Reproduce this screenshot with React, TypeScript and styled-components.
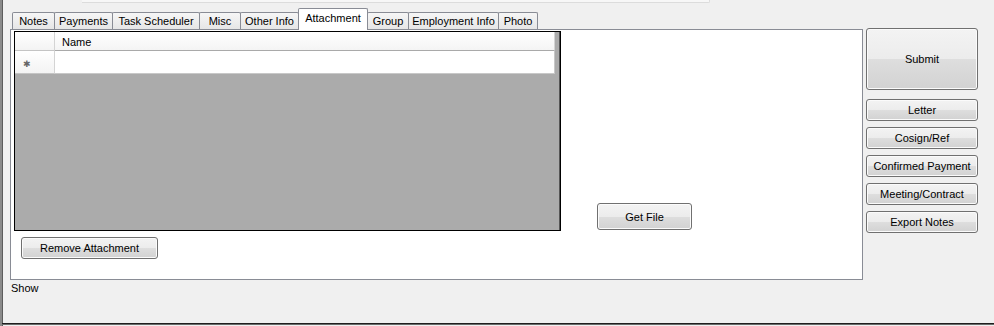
import React from "react";
import styled, { createGlobalStyle, css } from "styled-components";

const Global = createGlobalStyle`
  html, body { margin: 0; padding: 0; background: #f0f0f0; }
  body { font-family: "Liberation Sans", Arial, sans-serif; font-size: 11px; color: #000; }
  * { box-sizing: border-box; }
`;

const Window = styled.div`
  width: 994px;
  height: 326px;
  background: #f0f0f0;
  border-left: 2px solid #8a8a8a;
  box-shadow: inset 1px 0 0 #5c5c5c;
  display: flex;
  flex-direction: column;
  overflow: hidden;
`;

const TopField = styled.div`
  margin-left: 80px;
  width: 628px;
  height: 3px;
  background: #f7f7f7;
  border-bottom: 1px solid #dcdcdc;
  border-right: 1px solid #dcdcdc;
  border-bottom-right-radius: 2px;
  flex: none;
`;

const Main = styled.div`
  display: flex;
  margin-top: 5px;
  flex: none;
`;

const LeftCol = styled.div`
  margin-left: 8px;
  width: 853px;
  display: flex;
  flex-direction: column;
`;

const TabStrip = styled.div`
  height: 21px;
  display: flex;
  align-items: flex-end;
  padding-left: 2px;
`;

const Tab = styled.div<{ $w: number; $active?: boolean }>`
  width: ${(p) => p.$w + 1}px;
  margin-right: -1px;
  height: 17px;
  border: 1px solid #898c95;
  border-bottom: none;
  border-radius: 2px 2px 0 0;
  background: linear-gradient(#f6f6f6, #e6e6e6);
  display: flex;
  align-items: center;
  justify-content: center;
  white-space: nowrap;
  position: relative;
  ${(p) =>
    p.$active &&
    css`
      height: 22px;
      margin-bottom: -1px;
      background: #fff;
      z-index: 2;
      padding-bottom: 4px;
    `}
`;

const Panel = styled.div`
  height: 251px;
  border: 1px solid #898c95;
  background: #fff;
  padding: 1px 0 0 3px;
  display: flex;
  position: relative;
  z-index: 1;
`;

const LeftArea = styled.div`
  width: 547px;
  display: flex;
  flex-direction: column;
`;

const Grid = styled.div`
  width: 547px;
  height: 200px;
  border: 1px solid #000;
  background: #ababab;
  box-shadow: inset -1px 0 0 #555;
  display: flex;
  flex-direction: column;
`;

const GridRow = styled.div<{ $h: number }>`
  display: flex;
  width: 540px;
  height: ${(p) => p.$h}px;
  background: #fff;
`;

const RowHeaderCell = styled.div`
  width: 40px;
  flex: none;
  border-right: 1px solid #d4d4d4;
  border-bottom: 1px solid #c4c4c4;
  background: linear-gradient(#ffffff, #f3f3f3);
  display: flex;
  align-items: center;
  justify-content: flex-start;
  color: #666;
  font-size: 9px;
  padding-top: 3px;
  padding-left: 8px;
`;

const HeaderCell = styled.div`
  flex: 1;
  border-bottom: 1px solid #a9a9a9;
  border-right: 1px solid #d4d4d4;
  background: linear-gradient(#ffffff, #f4f4f4);
  display: flex;
  align-items: center;
  padding-left: 7px;
  padding-top: 1px;
`;

const DataCell = styled.div`
  flex: 1;
  border-right: 1px solid #c8c8c8;
  border-bottom: 1px solid #c8c8c8;
  background: #fff;
`;

const Btn = styled.button<{ $w: number; $h: number }>`
  width: ${(p) => p.$w}px;
  height: ${(p) => p.$h}px;
  border: 1px solid #707070;
  border-radius: 3px;
  background: linear-gradient(#f3f3f3 0%, #ececec 50%, #dedede 50%, #d2d2d2 100%);
  box-shadow: inset 0 0 0 1px #fbfbfb;
  font-family: "Liberation Sans", Arial, sans-serif;
  font-size: 11px;
  color: #000;
  padding: 0;
  flex: none;
  white-space: nowrap;
`;

const SubmitBtn = styled(Btn)`
  margin-bottom: 3px;
`;

const RemoveWrap = styled.div`
  margin-top: 6px;
  margin-left: 7px;
`;

const GetFileSlot = styled.div`
  padding-top: 172px;
  padding-left: 36px;
`;

const ShowLabel = styled.div`
  margin-top: 2px;
  margin-left: 1px;
  line-height: 13px;
`;

const RightCol = styled.div`
  margin-left: 3px;
  padding-top: 20px;
  display: flex;
  flex-direction: column;
  gap: 6px;
`;

const BottomEdge = styled.div`
  margin-top: auto;
  height: 3px;
  border-top: 1px solid #1e1e1e;
  box-shadow: inset 0 1px 0 #6a6a6a;
  flex: none;
`;

const tabs: { label: string; w: number }[] = [
  { label: "Notes", w: 42 },
  { label: "Payments", w: 58 },
  { label: "Task Scheduler", w: 87 },
  { label: "Misc", w: 41 },
  { label: "Other Info", w: 58 },
  { label: "Attachment", w: 69 },
  { label: "Group", w: 41 },
  { label: "Employment Info", w: 90 },
  { label: "Photo", w: 39 },
];

const sideButtons = ["Letter", "Cosign/Ref", "Confirmed Payment", "Meeting/Contract", "Export Notes"];

export default function App() {
  return (
    <>
      <Global />
      <Window>
        <TopField />
        <Main>
          <LeftCol>
            <TabStrip>
              {tabs.map((t) => (
                <Tab key={t.label} $w={t.w} $active={t.label === "Attachment"}>
                  {t.label}
                </Tab>
              ))}
            </TabStrip>
            <Panel>
              <LeftArea>
                <Grid>
                  <GridRow $h={19}>
                    <RowHeaderCell />
                    <HeaderCell>Name</HeaderCell>
                  </GridRow>
                  <GridRow $h={23}>
                    <RowHeaderCell>✱</RowHeaderCell>
                    <DataCell />
                  </GridRow>
                </Grid>
                <RemoveWrap>
                  <Btn $w={137} $h={22}>Remove Attachment</Btn>
                </RemoveWrap>
              </LeftArea>
              <GetFileSlot>
                <Btn $w={95} $h={27}>Get File</Btn>
              </GetFileSlot>
            </Panel>
            <ShowLabel>Show</ShowLabel>
          </LeftCol>
          <RightCol>
            <SubmitBtn $w={112} $h={62}>Submit</SubmitBtn>
            {sideButtons.map((b) => (
              <Btn key={b} $w={112} $h={22}>
                {b}
              </Btn>
            ))}
          </RightCol>
        </Main>
        <BottomEdge />
      </Window>
    </>
  );
}
